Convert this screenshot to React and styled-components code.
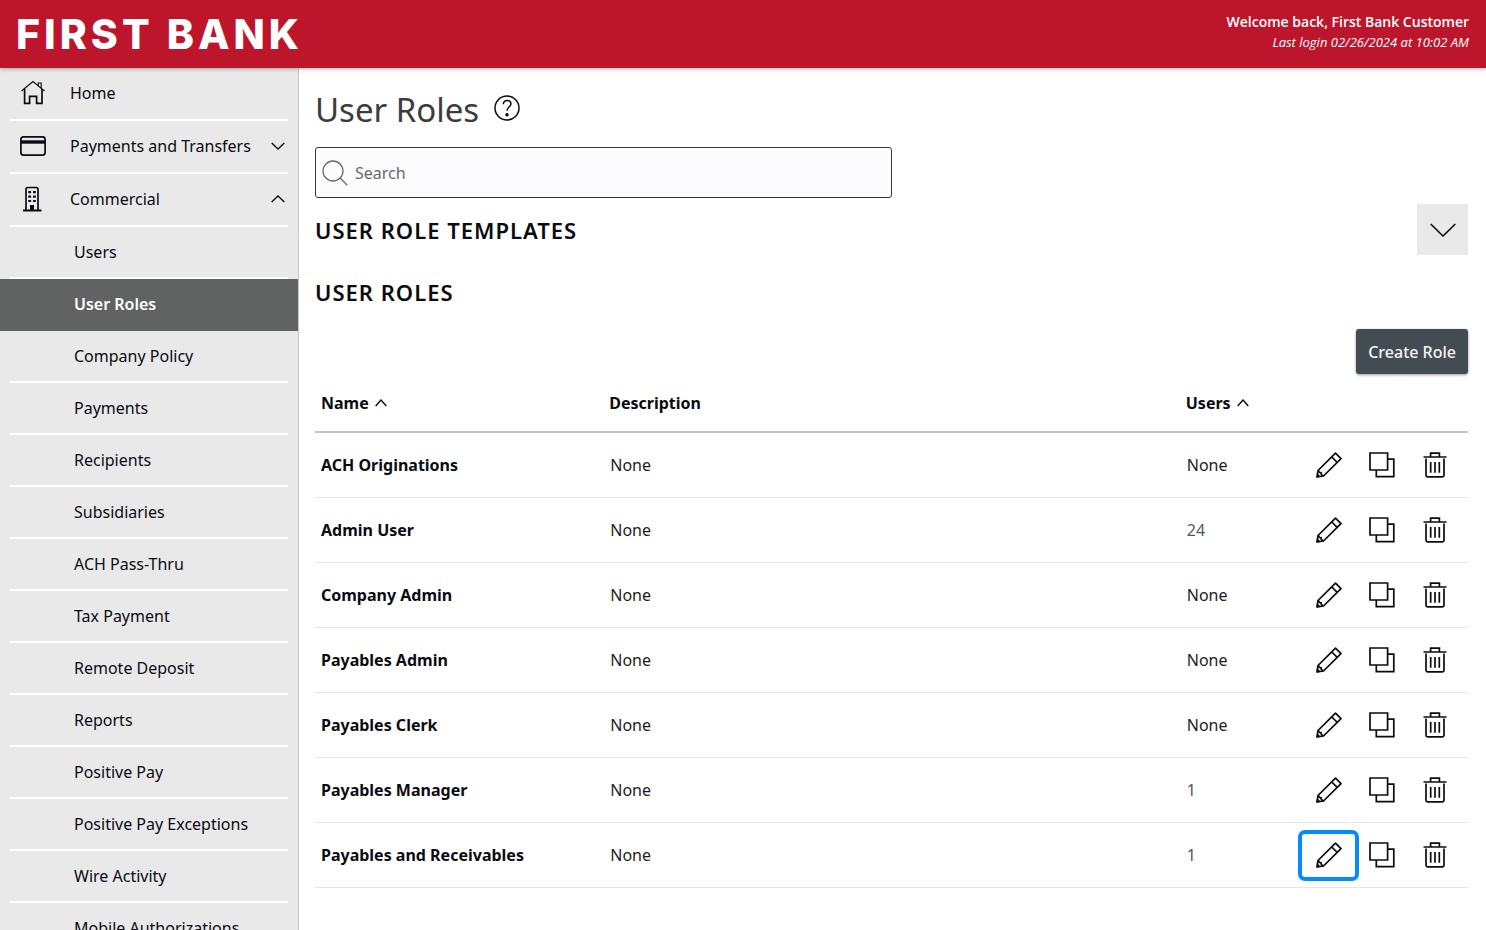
import React from "react";
import styled, { createGlobalStyle, css } from "styled-components";

const GlobalStyle = createGlobalStyle`
  *, *::before, *::after { box-sizing: border-box; }
  body {
    margin: 0;
    background: #fff;
    color: #0b0b12;
    font-family: "Noto Sans", "Open Sans", sans-serif;
    font-size: 16px;
    line-height: 24px;
  }
  button, input { font: inherit; color: inherit; }
  h1, h2, p, ul { margin: 0; padding: 0; }
  ul { list-style: none; }
  svg { display: block; flex: none; }
`;

const Shell = styled.div`
  display: flex;
  flex-direction: column;
  height: 100vh;
  overflow: hidden;
`;

const TopBar = styled.header`
  position: relative;
  z-index: 1;
  flex: none;
  display: flex;
  justify-content: space-between;
  height: 68px;
  padding: 12px 17px 0 16px;
  background: #bd162c;
  color: #fff;
  box-shadow: 0 1px 4px rgba(0, 0, 0, 0.3);
`;

const Logo = styled.a`
  color: inherit;
  font-family: Inter, sans-serif;
  font-size: 41px;
  font-weight: 800;
  line-height: 44px;
  letter-spacing: 4px;
  text-decoration: none;
`;

const Greeting = styled.div`
  text-align: right;
  font-family: "Open Sans", "Noto Sans", sans-serif;
  font-size: 14px;
  line-height: 20px;
`;

const Welcome = styled.p`
  font-weight: 600;
`;

const LastLogin = styled.p`
  font-size: 13px;
  font-style: italic;
`;

const Body = styled.div`
  flex: 1;
  display: flex;
  min-height: 0;
`;

const Sidebar = styled.nav`
  flex: none;
  width: 299px;
  overflow: hidden;
  background: #e9e9e9;
  border-right: 1px solid #c9c9c9;
`;

const NavItem = styled.li`
  height: ${(p) => (p.$top ? 53 : 52)}px;
  padding: 0 10px;
  ${(p) => p.$active && css`
    padding: 0;
    background: #616362;
  `}
`;

const NavLink = styled.a`
  display: flex;
  align-items: center;
  height: 100%;
  padding-left: ${(p) => (p.$sub ? 64 : 10)}px;
  padding-bottom: ${(p) => (p.$sub ? 0 : 2)}px;
  border-bottom: 2px solid #fdfdfd;
  color: inherit;
  text-decoration: none;
  ${(p) => p.$active && css`
    padding-left: 74px;
    border-bottom-color: transparent;
    color: #fff;
    font-weight: 600;
  `}
`;

const NavLabel = styled.span`
  flex: 1;
  margin-left: 24px;
`;

const NavChevron = styled.span`
  padding-right: 3px;
`;

const Main = styled.main`
  flex: 1;
  min-width: 0;
  overflow: auto;
  padding: 18px 18px 0 16px;
`;

const TitleRow = styled.div`
  display: flex;
  align-items: center;
  gap: 15px;
  height: 48px;
`;

const Title = styled.h1`
  color: #3c3c3c;
  font-size: 33px;
  font-weight: 400;
  line-height: 48px;
`;

const IconButton = styled.button`
  display: flex;
  align-items: center;
  justify-content: center;
  padding: 0;
  border: 0;
  background: none;
  cursor: pointer;
`;

const HelpButton = styled(IconButton)`
  height: 30px;
  align-items: flex-start;
`;

const SearchBox = styled.label`
  display: flex;
  align-items: center;
  gap: 7px;
  width: 50%;
  height: 51px;
  margin-top: 13px;
  padding: 0 6px;
  border: 1px solid #38383c;
  border-radius: 3px;
  background: #fcfcff;
  color: #6a6a6a;
`;

const SearchInput = styled.input`
  flex: 1;
  min-width: 0;
  padding: 0;
  border: 0;
  outline: 0;
  background: transparent;
  &::placeholder { color: #6a6a6a; opacity: 1; }
`;

const TemplatesRow = styled.div`
  display: flex;
  align-items: center;
  justify-content: space-between;
  margin-top: 6px;
`;

const SectionTitle = styled.h2`
  font-size: 22px;
  font-weight: 600;
  line-height: 32px;
  letter-spacing: 1px;
`;

const ExpandButton = styled(IconButton)`
  width: 51px;
  height: 51px;
  background: #e9e9e9;
`;

const RolesSection = styled.section`
  margin-top: 21px;
`;

const Toolbar = styled.div`
  display: flex;
  justify-content: flex-end;
  margin-top: 21px;
`;

const CreateButton = styled.button`
  height: 45px;
  padding: 0 12px;
  border: 0;
  border-radius: 3px;
  background: #444c53;
  color: #f4f4f4;
  font-weight: 500;
  box-shadow: 0 1px 3px rgba(0, 0, 0, 0.4);
  cursor: pointer;
`;

const RolesTable = styled.table`
  width: 100%;
  table-layout: fixed;
  border-collapse: separate;
  border-spacing: 0;
`;

const HeadCell = styled.th`
  width: ${(p) => p.$width};
  height: 59px;
  padding: 0 6px;
  border-bottom: 2px solid #c4c4c4;
  text-align: left;
  font-weight: 700;
`;

const SortButton = styled.button`
  display: flex;
  align-items: center;
  gap: 6px;
  padding: 0;
  border: 0;
  background: none;
  font-weight: 700;
  cursor: pointer;
`;

const cell = css`
  height: 65px;
  padding: 0 6px;
  border-bottom: 1px solid #e6e6e6;
  text-align: left;
`;

const NameCell = styled.th`
  ${cell}
  font-weight: 700;
`;

const Cell = styled.td`
  ${cell}
  padding-left: 7px;
  color: ${(p) => (p.$muted ? "#55555c" : "#1c1c22")};
`;

const ActionCell = styled.td`
  ${cell}
  padding: 0 7px 0 0;
`;

const Actions = styled.div`
  display: flex;
  justify-content: flex-end;
`;

const ActionButton = styled(IconButton)`
  width: 53px;
  height: 43px;
  border-radius: 3px;
  ${(p) => p.$highlighted && css`
    box-shadow: 0 0 0 4px #078bfb;
  `}
`;

const Svg = ({ w = 26, h = 26, sw = 1.7, children }) => (
  <svg width={w} height={h} viewBox={`0 0 ${w} ${h}`} fill="none" stroke="currentColor" strokeWidth={sw} aria-hidden="true">
    {children}
  </svg>
);

const HomeIcon = () => (
  <Svg>
    <path d="M1.5 11L13 1.5L24.5 11M18.3 5.5V3H21.2V8" strokeWidth="1.1" />
    <path d="M4.6 9V23.4H9.6V16.4H16.6V23.4H22V9" />
  </Svg>
);

const CardIcon = () => (
  <Svg>
    <rect x="0.9" y="3.9" width="24.2" height="18.2" rx="2.5" />
    <path d="M1 9H25" strokeWidth="3.4" />
  </Svg>
);

const BuildingIcon = () => (
  <Svg>
    <path d="M6 24.5V3.5Q6 1.5 8 1.5H16Q18 1.5 18 3.5V24.5" />
    <path d="M3 24.5H21.5" strokeWidth="2" />
    <path d="M8.3 6.2h2.8M13 6.2h2.8M8.3 10.6h2.8M13 10.6h2.8M8.3 15h2.8M13 15h2.8" strokeWidth="2.2" />
    <path d="M12 19V24.5" strokeWidth="4" />
  </Svg>
);

const Chevron = ({ w, h, up, sw = 1.4 }) => (
  <Svg w={w} h={h} sw={sw}>
    <path d={up ? `M0.7 ${h - 1}L${w / 2} 1L${w - 0.7} ${h - 1}` : `M0.7 1L${w / 2} ${h - 1}L${w - 0.7} 1`} />
  </Svg>
);

const HelpIcon = () => (
  <Svg sw={1.5}>
    <circle cx="13" cy="13" r="12" />
    <path d="M9.3 9.2C9.6 4.2 17 4.4 17 8.8C17 11.8 13 11.8 13 15.8" />
    <circle cx="13" cy="19.8" r="1.3" fill="currentColor" strokeWidth="1" />
  </Svg>
);

const SearchIcon = () => (
  <Svg sw={1.3}>
    <circle cx="11" cy="11" r="10" />
    <path d="M18 18L25.3 25.3" />
  </Svg>
);

const PencilIcon = () => (
  <Svg>
    <path d="M1 25L2 18.5L19.5 1.2L25 6.7L7.5 24Z" strokeLinejoin="round" />
    <path d="M15.8 5L21.2 10.4M2.4 18.4Q3.2 21 5 20.8Q4.8 23 7.5 23.8" />
    <path d="M1 25L1.5 22L4 24.5Z" fill="currentColor" strokeWidth="1" />
  </Svg>
);

const CopyIcon = () => (
  <Svg>
    <path d="M1 1H18.6V18H1Z" />
    <path d="M18.6 7.2H24.8V24.6H7.3V18" />
  </Svg>
);

const TrashIcon = () => (
  <Svg>
    <path d="M1.5 5H24.5M8.6 5V1.2H17.4V5" />
    <path d="M4 6.5V23.2Q4 24.8 5.6 24.8H20.4Q22 24.8 22 23.2V6.5" />
    <path d="M8.7 10V20.8M13 10V20.8M17.3 10V20.8" />
  </Svg>
);

const topItems = [
  { label: "Home", icon: <HomeIcon /> },
  { label: "Payments and Transfers", icon: <CardIcon />, chevron: "down" },
  { label: "Commercial", icon: <BuildingIcon />, chevron: "up" },
];

const subItems = [
  "Users", "User Roles", "Company Policy", "Payments", "Recipients", "Subsidiaries",
  "ACH Pass-Thru", "Tax Payment", "Remote Deposit", "Reports", "Positive Pay",
  "Positive Pay Exceptions", "Wire Activity", "Mobile Authorizations",
];

const roles = [
  { name: "ACH Originations", users: "None" },
  { name: "Admin User", users: "24" },
  { name: "Company Admin", users: "None" },
  { name: "Payables Admin", users: "None" },
  { name: "Payables Clerk", users: "None" },
  { name: "Payables Manager", users: "1" },
  { name: "Payables and Receivables", users: "1", highlighted: true },
];

export default function App() {
  return (
    <Shell>
      <GlobalStyle />
      <TopBar>
        <Logo href="#">FIRST BANK</Logo>
        <Greeting>
          <Welcome>Welcome back, First Bank Customer</Welcome>
          <LastLogin>Last login 02/26/2024 at 10:02 AM</LastLogin>
        </Greeting>
      </TopBar>
      <Body>
        <Sidebar aria-label="Main">
          <ul>
            {topItems.map((item) => (
              <NavItem key={item.label} $top>
                <NavLink href="#">
                  {item.icon}
                  <NavLabel>{item.label}</NavLabel>
                  {item.chevron && (
                    <NavChevron><Chevron w={14} h={8} up={item.chevron === "up"} /></NavChevron>
                  )}
                </NavLink>
              </NavItem>
            ))}
            {subItems.map((label) => {
              const active = label === "User Roles";
              return (
                <NavItem key={label} $active={active}>
                  <NavLink href="#" $sub $active={active} aria-current={active ? "page" : undefined}>{label}</NavLink>
                </NavItem>
              );
            })}
          </ul>
        </Sidebar>
        <Main>
          <TitleRow>
            <Title>User Roles</Title>
            <HelpButton type="button" aria-label="Help"><HelpIcon /></HelpButton>
          </TitleRow>
          <SearchBox>
            <SearchIcon />
            <SearchInput type="search" placeholder="Search" aria-label="Search" />
          </SearchBox>
          <TemplatesRow>
            <SectionTitle>USER ROLE TEMPLATES</SectionTitle>
            <ExpandButton type="button" aria-label="Expand templates" aria-expanded="false">
              <Chevron w={26} h={14} sw={1.6} />
            </ExpandButton>
          </TemplatesRow>
          <RolesSection>
            <SectionTitle>USER ROLES</SectionTitle>
            <Toolbar><CreateButton type="button">Create Role</CreateButton></Toolbar>
            <RolesTable>
              <thead>
                <tr>
                  <HeadCell scope="col" $width="25%">
                    <SortButton type="button">Name <Chevron w={12} h={8} up /></SortButton>
                  </HeadCell>
                  <HeadCell scope="col" $width="50%">Description</HeadCell>
                  <HeadCell scope="col">
                    <SortButton type="button">Users <Chevron w={12} h={8} up /></SortButton>
                  </HeadCell>
                  <HeadCell scope="col" $width="170px" aria-label="Actions" />
                </tr>
              </thead>
              <tbody>
                {roles.map((role) => (
                  <tr key={role.name}>
                    <NameCell scope="row">{role.name}</NameCell>
                    <Cell>None</Cell>
                    <Cell $muted={role.users !== "None"}>{role.users}</Cell>
                    <ActionCell>
                      <Actions>
                        <ActionButton type="button" aria-label={`Edit ${role.name}`} $highlighted={role.highlighted}><PencilIcon /></ActionButton>
                        <ActionButton type="button" aria-label={`Copy ${role.name}`}><CopyIcon /></ActionButton>
                        <ActionButton type="button" aria-label={`Delete ${role.name}`}><TrashIcon /></ActionButton>
                      </Actions>
                    </ActionCell>
                  </tr>
                ))}
              </tbody>
            </RolesTable>
          </RolesSection>
        </Main>
      </Body>
    </Shell>
  );
}
